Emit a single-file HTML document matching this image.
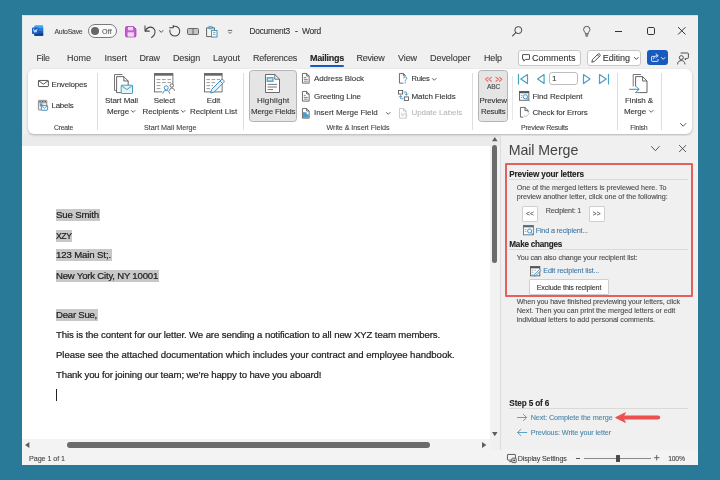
<!DOCTYPE html>
<html><head><meta charset="utf-8">
<style>
*{box-sizing:border-box;margin:0;padding:0}
html,body{width:720px;height:480px;overflow:hidden;background:#287a98;font-family:"Liberation Sans",sans-serif}
.a,.t,svg{position:absolute}
.t{white-space:nowrap;-webkit-text-stroke:.1px currentColor}
svg{overflow:visible}
.sep{position:absolute;width:1px;background:#dedede;top:73px;height:57px}
.hl{position:absolute;background:#c8c8c8}
.btn{position:absolute;background:#fff;border:1px solid #c6c6c6;border-radius:3px}
</style></head><body>
<!-- window -->
<div class="a" style="left:22px;top:15px;width:676px;height:450px;background:#f0f0f0"></div>
<div class="a" style="left:22px;top:15px;width:676px;height:1px;background:#cfe0ea"></div>
<div class="a" style="left:22px;top:134px;width:478px;height:12px;background:#ebebeb"></div>
<div class="a" style="left:490px;top:145.5px;width:10px;height:293.5px;background:#f2f2f2"></div>
<div class="a" style="left:22px;top:15px;width:1px;height:450px;background:#dcebee"></div>
<!-- ribbon panel -->
<div class="a" style="left:28px;top:69px;width:664px;height:64.5px;background:#fff;border-radius:6px;box-shadow:0 1px 2.5px rgba(0,0,0,.25)"></div>
<!-- document -->
<div class="a" style="left:22px;top:145.5px;width:468px;height:293.5px;background:#fff"></div>
<div class="a" style="left:22px;top:439px;width:468px;height:11px;background:#f3f3f3"></div>
<!-- status bar -->
<div class="a" style="left:22px;top:450px;width:676px;height:15px;background:#f3f3f3"></div>
<!-- pane -->
<div class="a" style="left:500px;top:136px;width:198px;height:314px;background:#f0f0f0;border-left:1px solid #dcdcdc"></div>
<div id="L" style="position:absolute;left:0;top:0;width:720px;height:480px;will-change:transform;opacity:.999">
<!-- ===== title bar ===== -->
<svg style="left:32.4px;top:25.2px" width="11.2" height="11" viewBox="0 0 12 11.5"><rect x="2.6" y="0" width="9.4" height="11.5" rx="1.3" fill="#41a5ee"/><rect x="2.6" y="3" width="9.4" height="3" fill="#2b7cd3"/><rect x="2.6" y="6" width="9.4" height="5.5" fill="#185abd"/><rect x="2.6" y="8.6" width="9.4" height="2.9" rx="1" fill="#103f91"/><rect x="0" y="2.4" width="7" height="7" rx="1" fill="#185abd"/><path d="M1.6 4.2 L2.6 7.7 L3.5 5 L4.4 7.7 L5.4 4.2" fill="none" stroke="#fff" stroke-width=".8" stroke-linejoin="round" stroke-linecap="round"/></svg>
<div class="a" style="left:87.5px;top:24px;width:29px;height:13.5px;border:1px solid #7a7a7a;border-radius:7px;background:#fbfbfb"></div>
<div class="a" style="left:91px;top:26.8px;width:8px;height:8px;border-radius:4px;background:#666"></div>
<!-- save -->
<svg style="left:124.5px;top:25.5px" width="11.5" height="11.5" viewBox="0 0 11.5 11.5"><path d="M.6 1.6 Q.6 .6 1.6 .6 H8.6 L10.9 2.9 V9.9 Q10.9 10.9 9.9 10.9 H1.6 Q.6 10.9 .6 9.9 Z" fill="#c55fd0" stroke="#a341b3" stroke-width=".9"/><rect x="3" y=".9" width="5" height="3.4" fill="#efd5f3"/><rect x="2.6" y="6.3" width="6.3" height="4.4" fill="#efd5f3"/></svg>
<!-- undo -->
<svg style="left:143.6px;top:25px" width="13" height="13.4" viewBox="0 0 13 11.5" preserveAspectRatio="none"><path d="M1 .8 V5.2 H5.4 M1.2 5 C3 2 6.6 .9 9.2 2.6 C12.2 4.6 11.6 8.6 7.6 10.8" fill="none" stroke="#444" stroke-width="1" stroke-linecap="round" stroke-linejoin="round"/></svg>
<svg style="left:158.5px;top:29.5px" width="4.4" height="3" viewBox="0 0 4.4 3"><path d="M.4 .5 L2.2 2.4 L4 .5" fill="none" stroke="#444" stroke-width=".9" stroke-linecap="round"/></svg>
<!-- redo -->
<svg style="left:168.6px;top:25.2px" width="11.6" height="12" viewBox="0 0 11 11"><path d="M.6 2.4 H4 M4 .4 V2.4 M4.2 1.1 A4.7 4.7 0 1 1 .9 4.6" fill="none" stroke="#444" stroke-width="1" stroke-linecap="round" stroke-linejoin="round"/></svg>
<!-- read mode book -->
<svg style="left:187px;top:27.8px" width="12" height="7" viewBox="0 0 12 7"><rect x=".5" y=".5" width="11" height="6" rx="1" fill="#c4c4c4" stroke="#5a5a5a" stroke-width=".9"/><path d="M6 .5 V6.5" stroke="#5a5a5a" stroke-width=".9"/></svg>
<!-- paste -->
<svg style="left:206px;top:25.5px" width="11.5" height="11.5" viewBox="0 0 11.5 11.5"><path d="M.6 1.8 H8.4 V10.6 H.6 Z" fill="#f4f4f4" stroke="#555" stroke-width=".9"/><rect x="2.6" y=".4" width="3.8" height="2.4" rx=".6" fill="#7fb7d6" stroke="#3d86ad" stroke-width=".6"/><rect x="5.6" y="4.4" width="5.4" height="6.6" fill="#fff" stroke="#3d86ad" stroke-width=".9"/><path d="M7 6.4 H9.6 M7 8.4 H9.6" stroke="#3d86ad" stroke-width=".7"/></svg>
<!-- qat chevron -->
<svg style="left:228.2px;top:29.6px" width="4" height="4" viewBox="0 0 4 4"><path d="M.3 .4 H3.7 M.5 2 L2 3.5 L3.5 2" fill="none" stroke="#444" stroke-width=".8" stroke-linecap="round"/></svg>
<!-- search -->
<svg style="left:511.5px;top:26px" width="10.5" height="10.5" viewBox="0 0 10.5 10.5"><circle cx="6.3" cy="4.1" r="3.5" fill="none" stroke="#444" stroke-width="1"/><path d="M3.8 6.7 L.6 9.9" stroke="#444" stroke-width="1.1" stroke-linecap="round"/></svg>
<!-- lightbulb -->
<svg style="left:583px;top:26px" width="7.5" height="10.5" viewBox="0 0 7.5 10.5"><path d="M2.4 7.4 C2.4 6 .6 5.4 .6 3.5 A3.15 3.15 0 0 1 6.9 3.5 C6.9 5.4 5.1 6 5.1 7.4 Z M2.5 8.9 H5 M3 10.1 H4.5" fill="none" stroke="#444" stroke-width=".9" stroke-linecap="round" stroke-linejoin="round"/></svg>
<!-- window controls -->
<div class="a" style="left:614.5px;top:30.6px;width:7.2px;height:1px;background:#333"></div>
<div class="a" style="left:647px;top:27px;width:8px;height:8px;border:1px solid #333;border-radius:1.8px"></div>
<svg style="left:677.8px;top:27.4px" width="7.6" height="7.6" viewBox="0 0 7.6 7.6"><path d="M.4 .4 L7.2 7.2 M7.2 .4 L.4 7.2" stroke="#333" stroke-width="1" stroke-linecap="round"/></svg>
<!-- mailings underline -->
<div class="a" style="left:310px;top:64.8px;width:34px;height:2px;border-radius:1px;background:#185abd"></div>
<!-- Comments / Editing / Share -->
<div class="btn" style="left:518px;top:49.6px;width:62.5px;height:16px"></div>
<svg style="left:522px;top:54px" width="8" height="8" viewBox="0 0 8 8"><path d="M.9 .6 H7.1 Q7.5 .6 7.5 1 V5 Q7.5 5.4 7.1 5.4 H3.4 L1.8 7.2 V5.4 H.9 Q.5 5.4 .5 5 V1 Q.5 .6 .9 .6 Z" fill="none" stroke="#333" stroke-width=".85" stroke-linejoin="round"/></svg>
<div class="btn" style="left:586.6px;top:49.6px;width:54.5px;height:16px"></div>
<svg style="left:590.5px;top:53px" width="10" height="10" viewBox="0 0 10 10"><path d="M.8 9.2 L1.5 6.6 L7.2 .9 Q7.9 .3 8.6 1 L9 1.4 Q9.6 2.1 9 2.8 L3.3 8.5 Z M6.4 1.8 L8.1 3.5" fill="none" stroke="#333" stroke-width=".85" stroke-linejoin="round"/></svg>
<svg style="left:633.5px;top:57px" width="4.6" height="3" viewBox="0 0 4.6 3"><path d="M.4 .5 L2.3 2.4 L4.2 .5" fill="none" stroke="#333" stroke-width=".9" stroke-linecap="round"/></svg>
<div class="a" style="left:646.6px;top:50px;width:21px;height:15.2px;border-radius:3px;background:#185abd"></div>
<svg style="left:650.5px;top:53px" width="9" height="9" viewBox="0 0 9 9"><path d="M3.4 3.4 H1.2 Q.6 3.4 .6 4 V7.8 Q.6 8.4 1.2 8.4 H6.4 Q7 8.4 7 7.8 V6.4 M2.6 5.8 C2.8 3.8 4.2 2.6 6.2 2.6 M5 .8 L7.2 2.7 L5 4.6" fill="none" stroke="#fff" stroke-width=".85" stroke-linecap="round" stroke-linejoin="round"/></svg>
<svg style="left:661px;top:57px" width="4.4" height="3" viewBox="0 0 4.4 3"><path d="M.4 .5 L2.2 2.3 L4 .5" fill="none" stroke="#fff" stroke-width=".9" stroke-linecap="round"/></svg>
<!-- person w/ comment -->
<svg style="left:676.5px;top:51.5px" width="12" height="12.5" viewBox="0 0 12 12.5"><path d="M4 1 H10.6 Q11.4 1 11.4 1.8 V5.6 Q11.4 6.4 10.6 6.4 H9.6 L8.2 8 V6.4" fill="none" stroke="#333" stroke-width=".85" stroke-linejoin="round" stroke-linecap="round"/><circle cx="4.3" cy="5.6" r="2" fill="#efefef" stroke="#333" stroke-width=".85"/><path d="M.6 12 C.8 9.4 2.4 8.6 4.3 8.6 C6.2 8.6 7.8 9.4 8 12" fill="none" stroke="#333" stroke-width=".85" stroke-linecap="round"/></svg>
<!-- ===== ribbon ===== -->
<div class="sep" style="left:97px"></div>
<div class="sep" style="left:243px"></div>
<div class="sep" style="left:472px"></div>
<div class="sep" style="left:512px;top:76px;height:44px;background:#e8e8e8"></div>
<div class="sep" style="left:617px"></div>
<div class="sep" style="left:661px"></div>
<!-- envelopes -->
<svg style="left:38px;top:80.3px" width="10.8" height="7" viewBox="0 0 10.8 7"><rect x=".45" y=".45" width="9.9" height="6.1" rx=".6" fill="#fff" stroke="#444" stroke-width=".9"/><path d="M.7 .8 L5.4 4.2 L10.1 .8" fill="none" stroke="#444" stroke-width=".9" stroke-linejoin="round"/></svg>
<!-- labels -->
<svg style="left:38.3px;top:100px" width="10" height="11" viewBox="0 0 10 11"><rect x=".4" y=".4" width="8.4" height="9.6" rx=".5" fill="#e9e9e9" stroke="#777" stroke-width=".8"/><path d="M.6 2.6 H8.6 M3.2 .6 V2.6 M6 .6 V2.6" stroke="#777" stroke-width=".7"/><rect x="1.4" y="1" width="1.2" height="1" fill="#555"/><rect x="4" y="1" width="1.2" height="1" fill="#555"/><rect x="6.8" y="1" width="1.2" height="1" fill="#555"/><rect x="1.8" y="3.4" width="2.6" height="2.8" fill="#4f9ccc"/><rect x="3.4" y="5.6" width="6.2" height="4.6" rx=".5" fill="#fff" stroke="#3b8cc0" stroke-width=".9"/><path d="M3.7 6 L6.5 8.2 L9.3 6" fill="none" stroke="#3b8cc0" stroke-width=".8"/></svg>
<!-- start mail merge -->
<svg style="left:113.8px;top:73.6px" width="19" height="20" viewBox="0 0 19 20"><path d="M2.4 16.4 H.5 V.5 H8.5" fill="none" stroke="#666" stroke-width=".9"/><path d="M2.6 2.6 H9.8 L14.2 7 V18.6 H2.6 Z" fill="#fff" stroke="#555" stroke-width=".9" stroke-linejoin="round"/><path d="M9.8 2.6 V7 H14.2" fill="none" stroke="#555" stroke-width=".9" stroke-linejoin="round"/><rect x="7.2" y="11.2" width="11.3" height="8.3" rx=".6" fill="#e2f2f7" stroke="#46a0c0" stroke-width="1"/><path d="M7.5 11.6 L12.85 15.6 L18.2 11.6" fill="none" stroke="#46a0c0" stroke-width="1" stroke-linejoin="round"/></svg>
<svg style="left:131.3px;top:109.8px" width="4.4" height="3" viewBox="0 0 4.4 3"><path d="M.4 .5 L2.2 2.3 L4 .5" fill="none" stroke="#444" stroke-width=".85" stroke-linecap="round"/></svg>
<!-- select recipients -->
<svg style="left:154.4px;top:73.3px" width="21" height="20.5" viewBox="0 0 21 20.5"><rect x=".5" y=".5" width="18.4" height="18.4" fill="#fff" stroke="#666" stroke-width=".9"/><rect x=".5" y=".5" width="18.4" height="2.2" fill="#666"/><path d="M2.6 6.6 H6.4 M8 6.6 H11.8 M13.4 6.6 H17 M2.6 9.6 H6.4 M8 9.6 H11.8 M13.4 9.6 H17 M2.6 12.6 H6.4 M8 12.6 H10 M2.6 15.6 H6.4" stroke="#9a9a9a" stroke-width="1"/><rect x="8.2" y="11.4" width="12.8" height="9.1" fill="#fff"/><circle cx="17.8" cy="12.6" r="1.7" fill="#fff" stroke="#555" stroke-width=".85"/><path d="M15.6 17.4 C15.8 15.6 16.6 15.2 17.8 15.2 C19.2 15.2 20.2 15.8 20.4 17.4" fill="none" stroke="#555" stroke-width=".85" stroke-linecap="round"/><circle cx="12.2" cy="14.8" r="2" fill="#fff" stroke="#3d8fc4" stroke-width=".95"/><path d="M8.9 20.3 C9.1 18 10.4 17.6 12.2 17.6 C14 17.6 15.3 18 15.5 20.3" fill="#fff" stroke="#3d8fc4" stroke-width=".95" stroke-linecap="round"/></svg>
<svg style="left:181px;top:109.8px" width="4.4" height="3" viewBox="0 0 4.4 3"><path d="M.4 .5 L2.2 2.3 L4 .5" fill="none" stroke="#444" stroke-width=".85" stroke-linecap="round"/></svg>
<!-- edit recipient list -->
<svg style="left:204px;top:73.3px" width="21" height="20.5" viewBox="0 0 21 20.5"><rect x=".5" y=".5" width="17.6" height="18.4" fill="#fff" stroke="#666" stroke-width=".9"/><rect x=".5" y=".5" width="17.6" height="2.2" fill="#666"/><path d="M2.4 6.6 H6 M7.6 6.6 H11.2 M12.8 6.6 H16.2 M2.4 9.6 H6 M7.6 9.6 H11.2 M2.4 12.6 H6 M7.6 12.6 H9 M2.4 15.6 H6" stroke="#9a9a9a" stroke-width="1"/><path d="M6.6 20 L7.6 16.4 L17.2 6.8 Q18.2 5.9 19.2 6.8 L19.8 7.4 Q20.7 8.4 19.8 9.4 L10.2 19 Z" fill="#e3f1fa" stroke="#3d8fc4" stroke-width="1" stroke-linejoin="round"/><path d="M16 8 L18.6 10.6" stroke="#3d8fc4" stroke-width=".9"/></svg>
<!-- highlight merge fields -->
<div class="a" style="left:249px;top:70.4px;width:47.8px;height:51.2px;background:#e5e5e5;border:1px solid #b4b4b4;border-radius:3.5px"></div>
<svg style="left:265px;top:74px" width="15" height="19" viewBox="0 0 15 19"><path d="M.5 .5 H9.8 L14.5 5.2 V18.5 H.5 Z" fill="#fff" stroke="#5a5a5a" stroke-width=".9" stroke-linejoin="round"/><path d="M9.8 .5 V5.2 H14.5" fill="none" stroke="#5a5a5a" stroke-width=".9" stroke-linejoin="round"/><rect x="1.6" y="3" width="7" height="5" fill="#5fa8d3"/><rect x="3" y="4.6" width="4.2" height="1.8" fill="#d8ecf7"/><path d="M2.6 10.4 H12 M2.6 13 H12 M2.6 15.6 H8" stroke="#777" stroke-width="1"/></svg>
<!-- address block / greeting / insert -->
<svg style="left:302.3px;top:73.3px" width="7.6" height="10.6" viewBox="0 0 7.6 10.6"><path d="M.45 .45 H4.6 L7.15 3 V10.15 H.45 Z M4.6 .45 V3 H7.15" fill="#fff" stroke="#555" stroke-width=".85" stroke-linejoin="round"/><path d="M1.8 4.6 H4.4 M1.8 6.4 H5.8 M1.8 8.2 H5.8" stroke="#666" stroke-width=".8"/></svg>
<svg style="left:302.3px;top:90.5px" width="7.6" height="10.6" viewBox="0 0 7.6 10.6"><path d="M.45 .45 H4.6 L7.15 3 V10.15 H.45 Z M4.6 .45 V3 H7.15" fill="#fff" stroke="#555" stroke-width=".85" stroke-linejoin="round"/><path d="M1.8 4.4 H3.6 M1.8 6.4 H5.8 M1.8 8.2 H5.8" stroke="#666" stroke-width=".8"/></svg>
<svg style="left:302.3px;top:107.5px" width="7.6" height="10.6" viewBox="0 0 7.6 10.6"><path d="M.45 .45 H4.6 L7.15 3 V10.15 H.45 Z" fill="#fff" stroke="#555" stroke-width=".85" stroke-linejoin="round"/><path d="M.9 4.2 H4.6 V6.2 H6.7 V9.7 H.9 Z" fill="#4a9bc9"/><path d="M4.6 .45 V3 H7.15" fill="none" stroke="#555" stroke-width=".85" stroke-linejoin="round"/></svg>
<svg style="left:386px;top:111.6px" width="4.4" height="3" viewBox="0 0 4.4 3"><path d="M.4 .5 L2.2 2.3 L4 .5" fill="none" stroke="#444" stroke-width=".85" stroke-linecap="round"/></svg>
<!-- rules -->
<svg style="left:399px;top:73.3px" width="8.4" height="10.6" viewBox="0 0 8.4 10.6"><path d="M4.4 10.15 H.45 V.45 H4.4 L6.6 2.6 M4.4 .45 V2.8 H6.4" fill="none" stroke="#555" stroke-width=".85" stroke-linejoin="round"/><path d="M4.6 5 C4.6 3.5 7.8 3.5 7.8 5.2 C7.8 6.4 6.2 6.4 6.2 7.8 M6.2 9.2 V9.9" fill="none" stroke="#3d8fc4" stroke-width=".95" stroke-linecap="round"/></svg>
<svg style="left:432px;top:77.6px" width="4.4" height="3" viewBox="0 0 4.4 3"><path d="M.4 .5 L2.2 2.3 L4 .5" fill="none" stroke="#444" stroke-width=".85" stroke-linecap="round"/></svg>
<!-- match fields -->
<svg style="left:398px;top:90px" width="11" height="11" viewBox="0 0 11 11"><rect x=".45" y=".45" width="4.2" height="3.6" fill="#fff" stroke="#555" stroke-width=".85"/><rect x="6.3" y="6.9" width="4.2" height="3.6" fill="#fff" stroke="#555" stroke-width=".85"/><path d="M6 2 H8.4 V5 M7 3.8 L8.4 5.2 L9.8 3.8 M5 8.8 H2.6 V5.8 M1.2 7 L2.6 5.6 L4 7" fill="none" stroke="#4a9bc9" stroke-width=".9" stroke-linejoin="round" stroke-linecap="round"/></svg>
<!-- update labels (disabled) -->
<svg style="left:399px;top:107.5px" width="8.6" height="10.6" viewBox="0 0 8.6 10.6"><path d="M.45 .45 H4.6 L7.15 3 V10.15 H.45 Z M4.6 .45 V3 H7.15" fill="#fff" stroke="#c2c2c2" stroke-width=".85" stroke-linejoin="round"/><path d="M3.4 6 H7.6 V9 M5 7.4 H2.6 V5" fill="none" stroke="#c8c8c8" stroke-width=".8"/></svg>
<!-- preview results -->
<div class="a" style="left:478.2px;top:70.4px;width:30px;height:51.2px;background:#e5e5e5;border:1px solid #b4b4b4;border-radius:3.5px"></div>
<svg style="left:485px;top:76.6px" width="17.4" height="4.6" viewBox="0 0 17.4 4.6"><path d="M3 .4 L.5 2.3 L3 4.2 M6.4 .4 L3.9 2.3 L6.4 4.2 M11 .4 L13.5 2.3 L11 4.2 M14.4 .4 L16.9 2.3 L14.4 4.2" fill="none" stroke="#ea6f70" stroke-width="1.15" stroke-linejoin="round" stroke-linecap="round"/></svg>
<!-- nav -->
<svg style="left:517.5px;top:73.6px" width="10" height="10.2" viewBox="0 0 10 10.2"><path d="M.5 .3 V9.9 M9.5 .6 V9.6 L2.8 5.1 Z" fill="none" stroke="#4ba0bf" stroke-width="1.2" stroke-linejoin="round" stroke-linecap="round"/></svg>
<svg style="left:536.6px;top:73.6px" width="7.6" height="10.2" viewBox="0 0 7.6 10.2"><path d="M7.1 .6 V9.6 L.6 5.1 Z" fill="none" stroke="#4ba0bf" stroke-width="1.2" stroke-linejoin="round"/></svg>
<div class="a" style="left:549px;top:72px;width:29px;height:13.2px;background:#fff;border:1px solid #bdbdbd;border-radius:3px"></div>
<svg style="left:583.4px;top:73.6px" width="7.6" height="10.2" viewBox="0 0 7.6 10.2"><path d="M.5 .6 V9.6 L7 5.1 Z" fill="none" stroke="#4ba0bf" stroke-width="1.2" stroke-linejoin="round"/></svg>
<svg style="left:598.8px;top:73.6px" width="10" height="10.2" viewBox="0 0 10 10.2"><path d="M9.5 .3 V9.9 M.5 .6 V9.6 L7.2 5.1 Z" fill="none" stroke="#4ba0bf" stroke-width="1.2" stroke-linejoin="round" stroke-linecap="round"/></svg>
<!-- find recipient -->
<svg style="left:519px;top:90.5px" width="10.6" height="10.8" viewBox="0 0 10.6 10.8"><rect x=".45" y=".45" width="9.4" height="8.8" fill="#fff" stroke="#555" stroke-width=".85"/><rect x=".45" y=".45" width="9.4" height="1.8" fill="#555"/><path d="M1.8 4.4 H3.4 M1.8 6.4 H3.2" stroke="#888" stroke-width=".8"/><circle cx="6.4" cy="5.8" r="2.2" fill="#eaf4fa" stroke="#3d8fc4" stroke-width=".9"/><path d="M8 7.5 L10.2 10" stroke="#3d8fc4" stroke-width="1" stroke-linecap="round"/></svg>
<!-- check for errors -->
<svg style="left:519.8px;top:107.2px" width="9.4" height="10.6" viewBox="0 0 9.4 10.6"><path d="M3.4 10.15 H.45 V.45 H5 L8.2 3.6 V5.4 M5 .45 V3.6 H8.2" fill="none" stroke="#555" stroke-width=".85" stroke-linejoin="round"/><path d="M4.2 8.4 L5.8 9.9 L9 6.6" fill="none" stroke="#8fc7a6" stroke-width=".95" stroke-linecap="round" stroke-linejoin="round"/></svg>
<!-- finish & merge -->
<svg style="left:628.6px;top:73.6px" width="19" height="20" viewBox="0 0 19 20"><path d="M6 16 H4.2 V.5 H12" fill="none" stroke="#666" stroke-width=".9"/><path d="M6.6 2.6 H13.6 L18 7 V18.6 H6.6 Z" fill="#fff" stroke="#555" stroke-width=".9" stroke-linejoin="round"/><path d="M13.6 2.6 V7 H18" fill="none" stroke="#555" stroke-width=".9" stroke-linejoin="round"/><rect x="0" y="12.4" width="10.6" height="5.8" fill="#fff"/><path d="M.5 15.3 H10 M6.8 12.2 L10 15.3 L6.8 18.4" fill="none" stroke="#3d93bb" stroke-width="1" stroke-linecap="round" stroke-linejoin="round"/></svg>
<svg style="left:648.6px;top:110px" width="4.4" height="3" viewBox="0 0 4.4 3"><path d="M.4 .5 L2.2 2.3 L4 .5" fill="none" stroke="#444" stroke-width=".85" stroke-linecap="round"/></svg>
<!-- collapse ribbon chevron -->
<svg style="left:680px;top:123px" width="6.4" height="3.8" viewBox="0 0 6.4 3.8"><path d="M.5 .5 L3.2 3.2 L5.9 .5" fill="none" stroke="#444" stroke-width=".9" stroke-linecap="round" stroke-linejoin="round"/></svg>
<!-- ===== document highlights ===== -->
<div class="hl" style="left:55.5px;top:209px;width:44px;height:12px"></div>
<div class="hl" style="left:55.5px;top:229.5px;width:16.5px;height:12px"></div>
<div class="hl" style="left:55.5px;top:249px;width:56px;height:12px"></div>
<div class="hl" style="left:55.5px;top:269.5px;width:103px;height:12px"></div>
<div class="hl" style="left:55.5px;top:309px;width:42px;height:12px"></div>
<div class="a" style="left:56px;top:389px;width:1px;height:11.5px;background:#222"></div>
<!-- vertical scrollbar -->
<svg style="left:492px;top:136.9px" width="5.6" height="4.2" viewBox="0 0 5.6 4.2"><path d="M2.8 0 L5.6 4.2 H0 Z" fill="#5f5f5f"/></svg>
<div class="a" style="left:492px;top:145px;width:5.4px;height:118.4px;border-radius:2.7px;background:#6b6b6b"></div>
<svg style="left:491.8px;top:431.6px" width="5.6" height="4.2" viewBox="0 0 5.6 4.2"><path d="M0 0 H5.6 L2.8 4.2 Z" fill="#5f5f5f"/></svg>
<!-- horizontal scrollbar -->
<svg style="left:25.3px;top:441.8px" width="4.4" height="6" viewBox="0 0 4.4 6"><path d="M4.4 0 V6 L0 3 Z" fill="#5f5f5f"/></svg>
<div class="a" style="left:66.6px;top:442px;width:363.6px;height:5.8px;border-radius:2.9px;background:#6b6b6b"></div>
<svg style="left:481.8px;top:441.8px" width="4.4" height="6" viewBox="0 0 4.4 6"><path d="M0 0 V6 L4.4 3 Z" fill="#5f5f5f"/></svg>
<!-- ===== pane ===== -->
<svg style="left:651.4px;top:146px" width="8.8" height="5.4" viewBox="0 0 8.8 5.4"><path d="M.5 .5 L4.4 4.7 L8.3 .5" fill="none" stroke="#444" stroke-width=".9" stroke-linecap="round" stroke-linejoin="round"/></svg>
<svg style="left:679.4px;top:145.2px" width="7.2" height="7.2" viewBox="0 0 7.2 7.2"><path d="M.4 .4 L6.8 6.8 M6.8 .4 L.4 6.8" stroke="#444" stroke-width=".9" stroke-linecap="round"/></svg>
<div class="a" style="left:505px;top:162.6px;width:188px;height:134.8px;border:2px solid #e4605d;border-radius:1px"></div>
<div class="a" style="left:509px;top:179.2px;width:179px;height:1px;background:#d9d9d9"></div>
<div class="btn" style="left:522px;top:206px;width:16px;height:15.6px;border-radius:1px;border-color:#cfcfcf"></div>
<div class="btn" style="left:588.6px;top:206px;width:16px;height:15.6px;border-radius:1px;border-color:#cfcfcf"></div>
<!-- find a recipient icon -->
<svg style="left:522.6px;top:225.2px" width="10.8" height="10.4" viewBox="0 0 10.8 10.4"><rect x=".45" y=".45" width="9.9" height="9.4" fill="#fff" stroke="#5a6a78" stroke-width=".85"/><rect x=".45" y=".45" width="9.9" height="1.9" fill="#5a6a78"/><path d="M1.8 4.6 H3.4 M1.8 6.6 H3.2" stroke="#888" stroke-width=".8"/><circle cx="6.6" cy="6" r="2.1" fill="#eaf4fa" stroke="#3d8fc4" stroke-width=".9"/><path d="M8.2 7.6 L10 9.6" stroke="#3d8fc4" stroke-width="1" stroke-linecap="round"/></svg>
<div class="a" style="left:509px;top:249.4px;width:179px;height:1px;background:#d9d9d9"></div>
<!-- edit recipient list icon -->
<svg style="left:530px;top:265.6px" width="11.2" height="10.6" viewBox="0 0 11.2 10.6"><rect x=".45" y=".45" width="9.4" height="9.4" fill="#fff" stroke="#555" stroke-width=".85"/><rect x=".45" y=".45" width="9.4" height="1.9" fill="#555"/><path d="M1.6 4.2 H3.4 M4.4 4.2 H6.2 M1.6 6.2 H3.4 M1.6 8.2 H3.4" stroke="#999" stroke-width=".8"/><path d="M4.2 10.2 L4.7 8.2 L9.2 3.7 Q9.8 3.2 10.4 3.8 Q11 4.4 10.4 5 L5.9 9.6 Z" fill="#e3f1fa" stroke="#3d8fc4" stroke-width=".85" stroke-linejoin="round"/></svg>
<div class="btn" style="left:529.4px;top:279.4px;width:79.4px;height:15.4px;border-radius:1px;border-color:#cfcfcf"></div>
<div class="a" style="left:509px;top:408px;width:179px;height:1px;background:#d9d9d9"></div>
<!-- next / previous arrows -->
<svg style="left:517.2px;top:413.8px" width="10.2" height="7" viewBox="0 0 10.2 7"><path d="M.4 3.5 H9.6 M6.4 .4 L9.7 3.5 L6.4 6.6" fill="none" stroke="#4a9bc4" stroke-width=".9" stroke-linecap="round" stroke-linejoin="round"/></svg>
<svg style="left:517.2px;top:429.2px" width="10.2" height="7" viewBox="0 0 10.2 7"><path d="M9.8 3.5 H.6 M3.8 .4 L.5 3.5 L3.8 6.6" fill="none" stroke="#4a9bc4" stroke-width=".9" stroke-linecap="round" stroke-linejoin="round"/></svg>
<!-- red annotation arrow -->
<svg style="left:614.6px;top:412.4px" width="45.4" height="11.2" viewBox="0 0 45.4 11.2"><path d="M8 5.6 H43.2" stroke="#ee4f4f" stroke-width="4" stroke-linecap="round"/><path d="M.6 5.6 L10.4 .8 L7.6 5.6 L10.4 10.4 Z" fill="#ee4f4f" stroke="#ee4f4f" stroke-width="1" stroke-linejoin="round"/></svg>
<!-- ===== status bar ===== -->
<svg style="left:506.6px;top:454px" width="9.6" height="9" viewBox="0 0 9.6 9"><rect x=".45" y=".45" width="8" height="5.6" rx=".5" fill="none" stroke="#444" stroke-width=".85"/><path d="M2.2 7.6 H4.6" stroke="#444" stroke-width=".85"/><rect x="5" y="4.2" width="4.2" height="4.4" rx=".5" fill="#f3f3f3" stroke="#444" stroke-width=".85"/><rect x="6.2" y="5.6" width="1.8" height="1.6" fill="#444"/></svg>
<div class="a" style="left:576px;top:457.8px;width:4.2px;height:1px;background:#555"></div>
<div class="a" style="left:584.4px;top:458px;width:66.4px;height:1px;background:#8a8a8a"></div>
<div class="a" style="left:616.4px;top:454.6px;width:3.2px;height:7.4px;border-radius:.6px;background:#4a4a4a"></div>
<svg style="left:654px;top:455.4px" width="5.4" height="5.4" viewBox="0 0 5.4 5.4"><path d="M0 2.7 H5.4 M2.7 0 V5.4" stroke="#555" stroke-width=".9"/></svg>

<div class="t" style="left:54.5px;top:27px;font-size:6.92px;line-height:9px;color:#444;letter-spacing:-0.25px">AutoSave</div>
<div class="t" style="left:102.0px;top:26px;font-size:7.2px;line-height:11px;color:#555;letter-spacing:0.18px">Off</div>
<div class="t" style="left:249.5px;top:25px;font-size:8.36px;line-height:12px;color:#333;letter-spacing:-0.25px">Document3</div>
<div class="t" style="left:295.0px;top:25px;font-size:8.6px;line-height:12px;color:#333;letter-spacing:0.00px">-</div>
<div class="t" style="left:302.0px;top:25px;font-size:8.44px;line-height:12px;color:#333;letter-spacing:-0.25px">Word</div>
<div class="t" style="left:36.5px;top:52px;font-size:8.68px;line-height:12px;color:#3a3a3a;letter-spacing:-0.25px">File</div>
<div class="t" style="left:67.0px;top:52px;font-size:9px;line-height:12px;color:#3a3a3a;letter-spacing:-0.00px">Home</div>
<div class="t" style="left:104.5px;top:52px;font-size:9px;line-height:12px;color:#3a3a3a;letter-spacing:-0.00px">Insert</div>
<div class="t" style="left:139.5px;top:52px;font-size:9px;line-height:12px;color:#3a3a3a;letter-spacing:-0.13px">Draw</div>
<div class="t" style="left:173.0px;top:52px;font-size:9px;line-height:12px;color:#3a3a3a;letter-spacing:-0.17px">Design</div>
<div class="t" style="left:213.0px;top:52px;font-size:9px;line-height:12px;color:#3a3a3a;letter-spacing:-0.01px">Layout</div>
<div class="t" style="left:253.0px;top:52px;font-size:9px;line-height:12px;color:#3a3a3a;letter-spacing:-0.20px">References</div>
<div class="t" style="left:310.0px;top:52px;font-size:9.0px;line-height:12px;color:#222;letter-spacing:-0.25px;font-weight:bold">Mailings</div>
<div class="t" style="left:356.5px;top:52px;font-size:9.0px;line-height:12px;color:#3a3a3a;letter-spacing:-0.25px">Review</div>
<div class="t" style="left:398.0px;top:52px;font-size:9px;line-height:12px;color:#3a3a3a;letter-spacing:-0.09px">View</div>
<div class="t" style="left:430.0px;top:52px;font-size:9px;line-height:12px;color:#3a3a3a;letter-spacing:-0.06px">Developer</div>
<div class="t" style="left:484.0px;top:52px;font-size:9px;line-height:12px;color:#3a3a3a;letter-spacing:-0.13px">Help</div>
<div class="t" style="left:532.0px;top:52px;font-size:9px;line-height:12px;color:#333;letter-spacing:-0.00px">Comments</div>
<div class="t" style="left:602.8px;top:52px;font-size:9px;line-height:12px;color:#333;letter-spacing:-0.05px">Editing</div>
<div class="t" style="left:51.5px;top:79px;font-size:8px;line-height:11px;color:#333;letter-spacing:-0.21px">Envelopes</div>
<div class="t" style="left:51.5px;top:100px;font-size:7.97px;line-height:11px;color:#333;letter-spacing:-0.25px">Labels</div>
<div class="t" style="left:54.0px;top:123px;font-size:6.84px;line-height:9px;color:#444;letter-spacing:-0.25px">Create</div>
<div class="t" style="left:105.0px;top:95px;font-size:8px;line-height:11px;color:#333;letter-spacing:-0.08px">Start Mail</div>
<div class="t" style="left:107.0px;top:106px;font-size:8px;line-height:11px;color:#333;letter-spacing:-0.14px">Merge</div>
<div class="t" style="left:153.8px;top:95px;font-size:8px;line-height:11px;color:#333;letter-spacing:-0.17px">Select</div>
<div class="t" style="left:142.5px;top:106px;font-size:8px;line-height:11px;color:#333;letter-spacing:-0.09px">Recipients</div>
<div class="t" style="left:206.8px;top:95px;font-size:8px;line-height:11px;color:#333;letter-spacing:-0.15px">Edit</div>
<div class="t" style="left:190.0px;top:106px;font-size:8px;line-height:11px;color:#333;letter-spacing:-0.07px">Recipient List</div>
<div class="t" style="left:144.0px;top:122px;font-size:7.2px;line-height:11px;color:#444;letter-spacing:-0.01px">Start Mail Merge</div>
<div class="t" style="left:257.0px;top:95px;font-size:8px;line-height:11px;color:#333;letter-spacing:0.15px">Highlight</div>
<div class="t" style="left:251.0px;top:106px;font-size:8px;line-height:11px;color:#333;letter-spacing:-0.15px">Merge Fields</div>
<div class="t" style="left:314.0px;top:73px;font-size:8px;line-height:11px;color:#333;letter-spacing:-0.09px">Address Block</div>
<div class="t" style="left:314.0px;top:91px;font-size:8px;line-height:11px;color:#333;letter-spacing:-0.08px">Greeting Line</div>
<div class="t" style="left:314.0px;top:107px;font-size:8px;line-height:11px;color:#333;letter-spacing:-0.05px">Insert Merge Field</div>
<div class="t" style="left:411.5px;top:73px;font-size:7.53px;line-height:11px;color:#333;letter-spacing:-0.25px">Rules</div>
<div class="t" style="left:411.5px;top:91px;font-size:8px;line-height:11px;color:#333;letter-spacing:-0.11px">Match Fields</div>
<div class="t" style="left:411.5px;top:107px;font-size:8px;line-height:11px;color:#b8b8b8;letter-spacing:-0.08px">Update Labels</div>
<div class="t" style="left:326.5px;top:122px;font-size:7.2px;line-height:11px;color:#444;letter-spacing:-0.08px">Write &amp; Insert Fields</div>
<div class="t" style="left:487.0px;top:82px;font-size:6.6px;line-height:9px;color:#444;letter-spacing:-0.19px">ABC</div>
<div class="t" style="left:479.5px;top:95px;font-size:8px;line-height:11px;color:#333;letter-spacing:-0.14px">Preview</div>
<div class="t" style="left:481.0px;top:106px;font-size:7.87px;line-height:11px;color:#333;letter-spacing:-0.25px">Results</div>
<div class="t" style="left:552.0px;top:73px;font-size:8px;line-height:11px;color:#333;letter-spacing:0.00px">1</div>
<div class="t" style="left:532.5px;top:91px;font-size:8px;line-height:11px;color:#333;letter-spacing:-0.08px">Find Recipient</div>
<div class="t" style="left:532.5px;top:107px;font-size:8px;line-height:11px;color:#333;letter-spacing:-0.20px">Check for Errors</div>
<div class="t" style="left:521.0px;top:123px;font-size:7.09px;line-height:10px;color:#444;letter-spacing:-0.25px">Preview Results</div>
<div class="t" style="left:625.0px;top:95px;font-size:8px;line-height:11px;color:#333;letter-spacing:-0.11px">Finish &amp;</div>
<div class="t" style="left:624.0px;top:106px;font-size:8px;line-height:11px;color:#333;letter-spacing:-0.14px">Merge</div>
<div class="t" style="left:630.3px;top:123px;font-size:6.94px;line-height:9px;color:#444;letter-spacing:-0.25px">Finish</div>
<div class="t" style="left:56.0px;top:208px;font-size:9.6px;line-height:13px;color:#222;letter-spacing:-0.14px;-webkit-text-stroke-width:0.22px">Sue Smith</div>
<div class="t" style="left:56.0px;top:230px;font-size:8.64px;line-height:12px;color:#222;letter-spacing:-0.43px;-webkit-text-stroke-width:0.22px">XZY</div>
<div class="t" style="left:56.0px;top:248px;font-size:9.6px;line-height:13px;color:#222;letter-spacing:-0.12px;-webkit-text-stroke-width:0.22px">123 Main St;.</div>
<div class="t" style="left:56.0px;top:269px;font-size:9.6px;line-height:13px;color:#222;letter-spacing:-0.21px;-webkit-text-stroke-width:0.22px">New York City, NY 10001</div>
<div class="t" style="left:56.0px;top:308px;font-size:9.6px;line-height:13px;color:#222;letter-spacing:-0.24px;-webkit-text-stroke-width:0.22px">Dear Sue,</div>
<div class="t" style="left:56.0px;top:328px;font-size:9.6px;line-height:13px;color:#222;letter-spacing:-0.11px;-webkit-text-stroke-width:0.22px">This is the content for our letter. We are sending a notification to all new XYZ team members.</div>
<div class="t" style="left:56.0px;top:348px;font-size:9.6px;line-height:13px;color:#222;letter-spacing:-0.04px;-webkit-text-stroke-width:0.22px">Please see the attached documentation which includes your contract and employee handbook.</div>
<div class="t" style="left:56.0px;top:368px;font-size:9.6px;line-height:13px;color:#222;letter-spacing:-0.14px;-webkit-text-stroke-width:0.22px">Thank you for joining our team; we’re happy to have you aboard!</div>
<div class="t" style="left:29.0px;top:453px;font-size:7.2px;line-height:11px;color:#444;letter-spacing:-0.07px">Page 1 of 1</div>
<div class="t" style="left:508.7px;top:141px;font-size:14.2px;line-height:18px;color:#444;letter-spacing:-0.06px;-webkit-text-stroke-width:0px">Mail Merge</div>
<div class="t" style="left:509.3px;top:169px;font-size:8.2px;line-height:11px;color:#222;letter-spacing:-0.16px;font-weight:bold">Preview your letters</div>
<div class="t" style="left:516.7px;top:182px;font-size:7.2px;line-height:11px;color:#4a4a4a;letter-spacing:-0.03px">One of the merged letters is previewed here. To</div>
<div class="t" style="left:516.7px;top:191px;font-size:7.2px;line-height:11px;color:#4a4a4a;letter-spacing:-0.03px">preview another letter, click one of the following:</div>
<div class="t" style="left:526.0px;top:209px;font-size:6.6px;line-height:9px;color:#444;letter-spacing:0.15px">&lt;&lt;</div>
<div class="t" style="left:592.7px;top:209px;font-size:6.6px;line-height:9px;color:#444;letter-spacing:0.15px">&gt;&gt;</div>
<div class="t" style="left:545.7px;top:205px;font-size:7.2px;line-height:11px;color:#4a4a4a;letter-spacing:-0.22px">Recipient: 1</div>
<div class="t" style="left:535.7px;top:225px;font-size:7.2px;line-height:11px;color:#3d78a6;letter-spacing:-0.15px">Find a recipient...</div>
<div class="t" style="left:509.3px;top:239px;font-size:8.16px;line-height:11px;color:#222;letter-spacing:-0.25px;font-weight:bold">Make changes</div>
<div class="t" style="left:516.7px;top:252px;font-size:7.2px;line-height:11px;color:#4a4a4a;letter-spacing:-0.09px">You can also change your recipient list:</div>
<div class="t" style="left:543.3px;top:265px;font-size:7.2px;line-height:11px;color:#3d78a6;letter-spacing:-0.11px">Edit recipient list...</div>
<div class="t" style="left:536.7px;top:282px;font-size:7.2px;line-height:11px;color:#333;letter-spacing:-0.15px">Exclude this recipient</div>
<div class="t" style="left:516.7px;top:296px;font-size:7.2px;line-height:11px;color:#4a4a4a;letter-spacing:-0.10px">When you have finished previewing your letters, click</div>
<div class="t" style="left:516.7px;top:305px;font-size:7.2px;line-height:11px;color:#4a4a4a;letter-spacing:-0.03px">Next. Then you can print the merged letters or edit</div>
<div class="t" style="left:516.7px;top:314px;font-size:7.2px;line-height:11px;color:#4a4a4a;letter-spacing:-0.04px">individual letters to add personal comments.</div>
<div class="t" style="left:509.3px;top:398px;font-size:8.2px;line-height:11px;color:#222;letter-spacing:-0.13px;font-weight:bold">Step 5 of 6</div>
<div class="t" style="left:530.7px;top:412px;font-size:7.2px;line-height:11px;color:#4b86a8;letter-spacing:-0.08px">Next: Complete the merge</div>
<div class="t" style="left:530.7px;top:427px;font-size:7.2px;line-height:11px;color:#4b86a8;letter-spacing:-0.08px">Previous: Write your letter</div>
<div class="t" style="left:517.7px;top:453px;font-size:7.2px;line-height:11px;color:#444;letter-spacing:-0.16px">Display Settings</div>
<div class="t" style="left:668.3px;top:454px;font-size:6.81px;line-height:9px;color:#444;letter-spacing:-0.25px">100%</div>
</div>
</body></html>
